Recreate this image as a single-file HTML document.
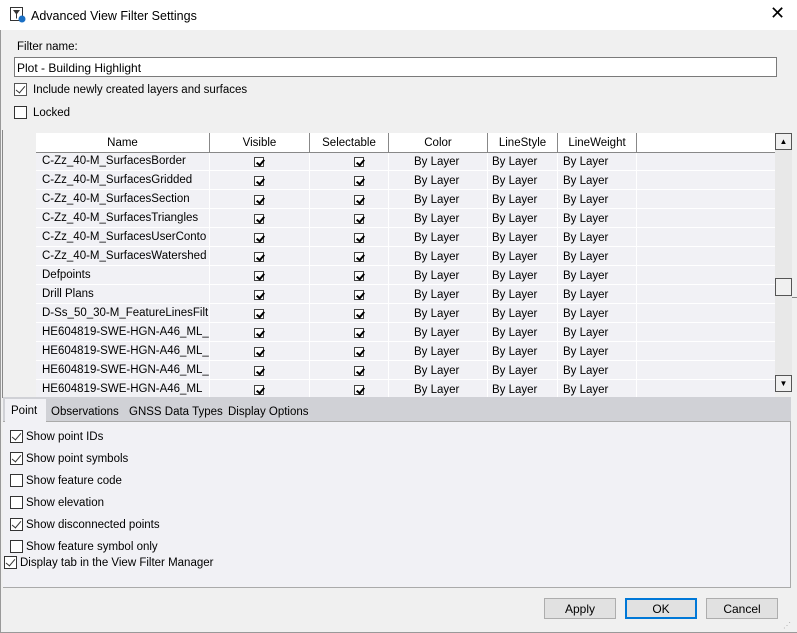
<!DOCTYPE html>
<html><head><style>
*{box-sizing:border-box;margin:0;padding:0}
body{width:797px;height:633px;overflow:hidden;background:#f0f0f0;font-family:"Liberation Sans",sans-serif;font-size:11.5px;color:#000;position:relative}
.a{position:absolute}
.cb{position:absolute;width:13px;height:13px;border:1px solid #333;background:#fff}
.cb.on::after{content:"";position:absolute;left:3px;top:0px;width:4px;height:8px;border:solid #333;border-width:0 1.5px 1.5px 0;transform:rotate(40deg)}
.sm{position:absolute;width:10px;height:10px;border:1px solid #444;background:#fff}
.sm::after{content:"";position:absolute;left:2.5px;top:0px;width:3px;height:6px;border:solid #000;border-width:0 2px 2px 0;transform:rotate(40deg)}
.row{position:absolute;left:36px;width:739px;height:19px;border-bottom:1px solid #fff;background:#f1f1f5}
.row span{position:absolute;top:3px}
.hd{position:absolute;top:133px;height:20px;border-right:1px solid #888;border-bottom:1px solid #888;text-align:center;line-height:20px;background:#fff}
.btn{position:absolute;top:598px;width:72px;height:21px;border:1px solid #adadad;background:#e1e1e1;text-align:center;line-height:20px;font-size:12px}
</style></head><body>
<div class="a" style="left:0;top:0;width:797px;height:30px;background:#fff"></div>
<svg class="a" style="left:10px;top:7px" width="16" height="16"><rect x="0.5" y="0.5" width="12" height="13" fill="#fff" stroke="#333"/><path d="M3 3h7l-3 4v4l-1 1V7z" fill="#333"/><circle cx="12" cy="12" r="3.5" fill="#1a6fc4"/></svg>
<div class="a" style="left:31px;top:9px;font-size:12.5px">Advanced View Filter Settings</div>
<div class="a" style="left:770px;top:3px;font-size:18px;font-weight:300">✕</div>
<div class="a" style="left:0;top:30px;width:1px;height:603px;background:#999"></div>
<div class="a" style="left:17px;top:41px">Filter name:</div>
<div class="a" style="left:14px;top:57px;width:763px;height:20px;border:1px solid #7a7a7a;background:#fff;padding:3px 2px;font-size:12px">Plot - Building Highlight</div>
<div class="cb on" style="left:14px;top:83px;border-color:#555"></div>
<div class="a" style="left:33px;top:84px">Include newly created layers and surfaces</div>
<div class="cb" style="left:14px;top:106px"></div>
<div class="a" style="left:33px;top:107px">Locked</div>
<div class="a" style="left:2px;top:130px;width:1px;height:268px;background:#888"></div>
<div class="a" style="left:36px;top:133px;width:739px;height:264px;background:#f1f1f5;border-left:1px solid #888"></div>
<div class="hd" style="left:36px;width:174px">Name</div>
<div class="hd" style="left:210px;width:100px">Visible</div>
<div class="hd" style="left:310px;width:79px">Selectable</div>
<div class="hd" style="left:389px;width:99px">Color</div>
<div class="hd" style="left:488px;width:70px">LineStyle</div>
<div class="hd" style="left:558px;width:79px">LineWeight</div>
<div class="hd" style="left:637px;width:138px;border-right:none"></div>
<div class="a" style="left:36px;top:153px;width:739px;height:244px;overflow:hidden">
<div style="position:relative;left:-36px;top:-153px">
<div class="row" style="top:152px"><span style="left:6px">C-Zz_40-M_SurfacesBorder</span></div>
<div class="row" style="top:171px"><span style="left:6px">C-Zz_40-M_SurfacesGridded</span></div>
<div class="row" style="top:190px"><span style="left:6px">C-Zz_40-M_SurfacesSection</span></div>
<div class="row" style="top:209px"><span style="left:6px">C-Zz_40-M_SurfacesTriangles</span></div>
<div class="row" style="top:228px"><span style="left:6px">C-Zz_40-M_SurfacesUserConto</span></div>
<div class="row" style="top:247px"><span style="left:6px">C-Zz_40-M_SurfacesWatershed</span></div>
<div class="row" style="top:266px"><span style="left:6px">Defpoints</span></div>
<div class="row" style="top:285px"><span style="left:6px">Drill Plans</span></div>
<div class="row" style="top:304px"><span style="left:6px">D-Ss_50_30-M_FeatureLinesFilt</span></div>
<div class="row" style="top:323px"><span style="left:6px">HE604819-SWE-HGN-A46_ML_</span></div>
<div class="row" style="top:342px"><span style="left:6px">HE604819-SWE-HGN-A46_ML_</span></div>
<div class="row" style="top:361px"><span style="left:6px">HE604819-SWE-HGN-A46_ML_</span></div>
<div class="row" style="top:380px"><span style="left:6px">HE604819-SWE-HGN-A46_ML</span></div>
</div></div>
<svg class="a" style="left:36px;top:153px" width="739" height="244">
<g stroke="#fff" stroke-width="1">
<line x1="173.5" y1="0" x2="173.5" y2="244"/><line x1="273.5" y1="0" x2="273.5" y2="244"/><line x1="352.5" y1="0" x2="352.5" y2="244"/><line x1="451.5" y1="0" x2="451.5" y2="244"/><line x1="521.5" y1="0" x2="521.5" y2="244"/><line x1="600.5" y1="0" x2="600.5" y2="244"/>
</g>
</svg>
<div id="cells"></div>
<div class="a" style="left:775px;top:133px;width:17px;height:259px;background:#e8e8e8"></div>
<div class="a" style="left:775px;top:133px;width:17px;height:17px;border:1px solid #555;background:#f0f0f0;text-align:center;font-size:8px;line-height:15px">▲</div>
<div class="a" style="left:775px;top:278px;width:17px;height:18px;border:1px solid #555;background:#f0f0f0"></div>
<div class="a" style="left:775px;top:375px;width:17px;height:17px;border:1px solid #555;background:#f0f0f0;text-align:center;font-size:8px;line-height:15px">▼</div>
<div class="a" style="left:792px;top:297px;width:5px;height:1px;background:#888"></div>
<div class="a" style="left:3px;top:397px;width:788px;height:25px;background:#d0d1d6;border-bottom:1px solid #aaa"></div>
<div class="a" style="left:5px;top:399px;width:41px;height:24px;background:#f1f1f5;padding:6px 0 0 6px">Point</div>
<div class="a" style="left:51px;top:406px">Observations</div>
<div class="a" style="left:129px;top:406px">GNSS Data Types</div>
<div class="a" style="left:228px;top:406px">Display Options</div>
<div class="a" style="left:3px;top:422px;width:788px;height:166px;background:#f1f1f5;border-bottom:1px solid #aaa;border-right:1px solid #aaa"></div>
<div class="cb on" style="left:10px;top:430px"></div><div class="a" style="left:26px;top:431px">Show point IDs</div>
<div class="cb on" style="left:10px;top:452px"></div><div class="a" style="left:26px;top:453px">Show point symbols</div>
<div class="cb" style="left:10px;top:474px"></div><div class="a" style="left:26px;top:475px">Show feature code</div>
<div class="cb" style="left:10px;top:496px"></div><div class="a" style="left:26px;top:497px">Show elevation</div>
<div class="cb on" style="left:10px;top:518px"></div><div class="a" style="left:26px;top:519px">Show disconnected points</div>
<div class="cb" style="left:10px;top:540px"></div><div class="a" style="left:26px;top:541px">Show feature symbol only</div>
<div class="cb on" style="left:4px;top:556px"></div><div class="a" style="left:20px;top:557px">Display tab in the View Filter Manager</div>
<div class="btn" style="left:544px">Apply</div>
<div class="btn" style="left:625px;border:2px solid #0078d7;line-height:18px">OK</div>
<div class="btn" style="left:706px">Cancel</div>
<div class="a" style="left:0;top:632px;width:797px;height:1px;background:#999"></div>
<div class="a" style="left:783px;top:621px;font-size:8px;color:#aaa;letter-spacing:-1px">⋰</div>
<script>
var rows=13,h='';
for(var i=0;i<rows;i++){var t=152+i*19;
h+='<div class="sm" style="left:254px;top:'+(t+5)+'px"></div><div class="sm" style="left:354px;top:'+(t+5)+'px"></div>';
['414','492','563'].forEach(function(x){h+='<div class="a" style="left:'+x+'px;top:'+(t+4)+'px">By Layer</div>'});}
var c=document.getElementById('cells');c.style.cssText='position:absolute;left:0;top:0;width:797px;height:397px;clip-path:inset(153px 0 0 0)';c.innerHTML=h;
</script>
</body></html>
